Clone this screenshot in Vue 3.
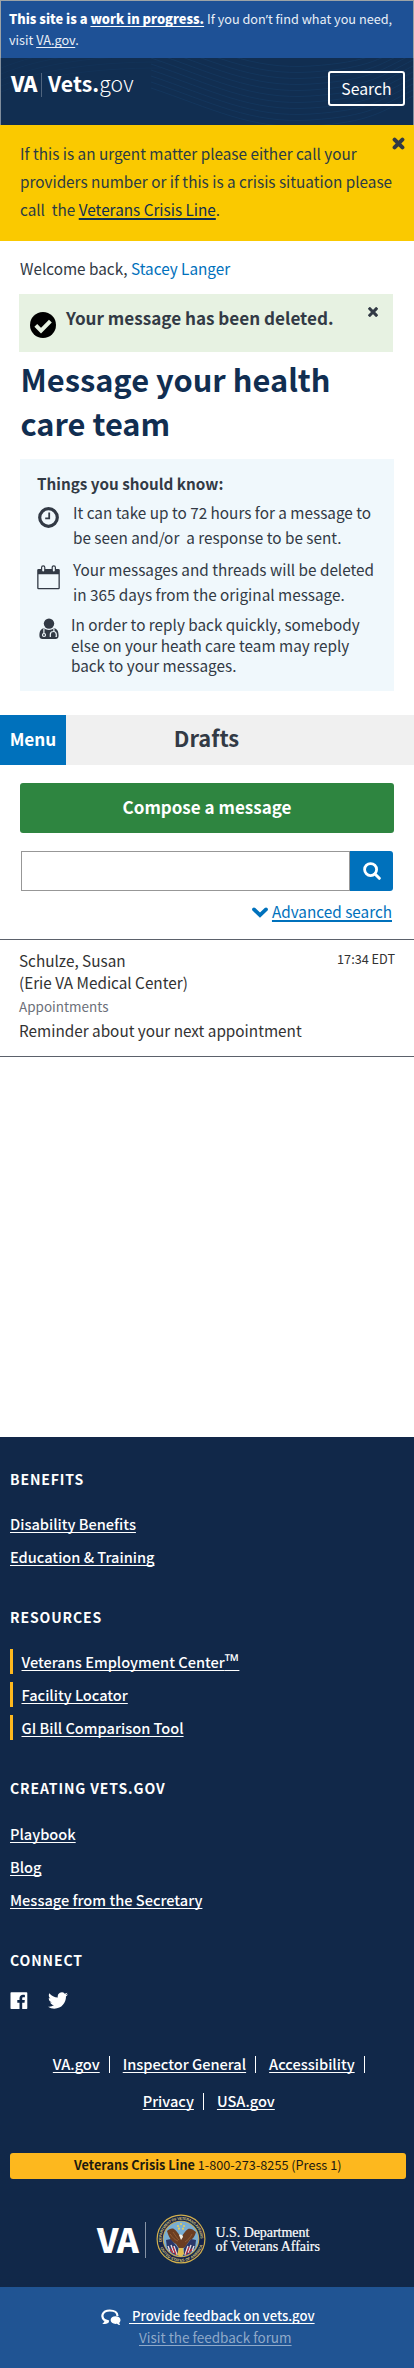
<script setup>
const tips = [
  { icon: 'clock', lines: ['It can take up to 72 hours for a message to', 'be seen and/or \u00a0a response to be sent.'] },
  { icon: 'calendar', lines: ['Your messages and threads will be deleted', 'in 365 days from the original message.'] },
  { icon: 'doctor', lines: ['In order to reply back quickly, somebody', 'else on your heath care team may reply', 'back to your messages.'] }
]
const groups = [
  { title: 'BENEFITS', links: [{ text: 'Disability Benefits' }, { text: 'Education & Training' }] },
  { title: 'RESOURCES', marked: true, links: [{ text: 'Veterans Employment Center', mark: '™' }, { text: 'Facility Locator' }, { text: 'GI Bill Comparison Tool' }] },
  { title: 'CREATING VETS.GOV', links: [{ text: 'Playbook' }, { text: 'Blog' }, { text: 'Message from the Secretary' }] }
]
const waves = Array.from({ length: 11 }, (_, i) => i * 6)
</script>

<template>
  <div class="page">
    <div class="banner">
      <div><b class="b1">This site is a <u>work in progress.</u></b> <span class="b2">If you don<span class="apos">’</span>t find what you need,</span></div>
      <div>visit <u>VA.gov</u>.</div>
    </div>
    <header class="header">
      <svg class="waves" width="412" height="67" viewBox="0 0 412 67" fill="none" stroke="#17406b" stroke-width="1" opacity=".45">
        <path v-for="w in waves" :key="w" :d="`M150 ${w - 30}C210 ${w - 10} 250 ${w + 12} 310 ${w + 8}S380 ${w - 6} 412 ${w - 22}`" />
        <path v-for="w in waves.slice(0, 5)" :key="'l' + w" :d="`M0 ${w + 10}C40 ${w - 6} 90 ${w - 14} 160 ${w - 14}`" opacity=".5" />
      </svg>
      <div class="brand"><span class="va">VA</span><i class="bar"></i><span class="vets">Vets.</span><span class="gov">gov</span></div>
      <button class="search-btn">Search</button>
    </header>

    <section class="urgent">
      <p>If this is an urgent matter please either call your</p>
      <p>providers number or if this is a crisis situation please</p>
      <p>call &nbsp;the <a>Veterans Crisis Line</a>.</p>
      <svg class="x" width="13" height="13" viewBox="0 0 13 13"><path d="M2.6 2.6l7.8 7.8M10.4 2.6l-7.8 7.8" stroke="#323a45" stroke-width="4" stroke-linecap="round" /></svg>
    </section>

    <p class="welcome">Welcome back, <a>Stacey Langer</a></p>

    <div class="notice">
      <svg class="check" width="26" height="26" viewBox="0 0 26 26"><circle cx="13" cy="13" r="13" /><path d="M5.8 13.4l5.2 5.2 9.4-9.4" fill="none" stroke="#e7f2e2" stroke-width="4" /></svg>
      <span>Your message has been deleted.</span>
      <svg class="x" width="10" height="10" viewBox="0 0 13 13"><path d="M2.4 2.4l8.2 8.2M10.6 2.4l-8.2 8.2" stroke="#323a45" stroke-width="3.9" stroke-linecap="square" /></svg>
    </div>

    <h1>Message your health<br />care team</h1>

    <section class="know">
      <h2>Things you should know:</h2>
      <div v-for="t in tips" :key="t.icon" class="tip" :class="t.icon">
        <svg v-if="t.icon === 'clock'" width="21" height="21" viewBox="0 0 21 21" fill="none" stroke="#323a45"><circle cx="10.5" cy="10.5" r="8.8" stroke-width="3.2" /><path d="M11.2 5.4v6H7.2" stroke-width="1.8" /></svg>
        <svg v-else-if="t.icon === 'calendar'" width="23" height="25" viewBox="0 0 23 25">
          <path d="M1.5 4h20a1.3 1.3 0 0 1 1.3 1.3V23a1.3 1.3 0 0 1-1.3 1.3h-20A1.3 1.3 0 0 1 .2 23V5.3A1.3 1.3 0 0 1 1.5 4zM1.5 9.2v13.8h20V9.2z" fill="#323a45" fill-rule="evenodd" />
          <rect x="4.6" y=".8" width="3.2" height="6.2" rx="1.6" fill="#f0f8fc" stroke="#323a45" stroke-width="1.2" /><rect x="15.2" y=".8" width="3.2" height="6.2" rx="1.6" fill="#f0f8fc" stroke="#323a45" stroke-width="1.2" />
        </svg>
        <svg v-else width="20" height="22" viewBox="0 0 20 22">
          <circle cx="10" cy="5.6" r="5.2" fill="#323a45" />
          <path d="M5 10.300C7.500 12.600 12.500 12.600 15 10.300c3.300.5 4.600 3.200 4.600 7.500 0 2.300-1.300 3.300-3 3.300H3.400c-1.700 0-3-1-3-3.300 0-4.300 1.300-7 4.600-7.500z" fill="#323a45" />
          <g fill="none" stroke="#f0f8fc" stroke-width="1.2"><path d="M4.900 10.500v5" /><circle cx="5" cy="17" r="1.500" /><path d="M14.900 10.500v3M11.900 18.500h-.6v-2c0-4 6-4 6 0v2h-.8" /></g>
        </svg>
        <div><p v-for="l in t.lines" :key="l">{{ l }}</p></div>
      </div>
    </section>

    <nav class="folder"><button>Menu</button><h3>Drafts</h3></nav>
    <button class="compose">Compose a message</button>
    <div class="find">
      <input type="text" aria-label="Search messages" />
      <button aria-label="Search"><svg width="18" height="18" viewBox="0 0 18 18" fill="none" stroke="#fff"><circle cx="7.6" cy="7.6" r="6" stroke-width="2.8" /><path d="M12 12l4.3 4.3" stroke-width="3" stroke-linecap="round" /></svg></button>
    </div>
    <div class="advanced">
      <svg width="16" height="11" viewBox="0 0 16 11"><path d="M2 2.400l6 5.800 6-5.800" fill="none" stroke="#0071bc" stroke-width="3.7" stroke-linecap="round" /></svg>
      <a>Advanced search</a>
    </div>

    <article class="message">
      <div class="from"><span>Schulze, Susan</span><time>17:34 EDT</time></div>
      <div>(Erie VA Medical Center)</div>
      <div class="category">Appointments</div>
      <div>Reminder about your next appointment</div>
    </article>

    <footer class="footer">
      <section v-for="g in groups" :key="g.title" class="group" :class="{ marked: g.marked }">
        <h4>{{ g.title }}</h4>
        <ul><li v-for="l in g.links" :key="l.text"><a>{{ l.text }}<span v-if="l.mark" class="tm">{{ l.mark }}</span></a></li></ul>
      </section>
      <section class="group">
        <h4>CONNECT</h4>
        <div class="social">
          <svg width="18" height="18" viewBox="0 0 18 18"><path d="M1.300.3h15.200a.8.8 0 0 1 .8.8v15.200a.8.8 0 0 1-.8.8h-4.300v-6.400h2.300l.3-2.600h-2.600V6.500c0-.8.300-1.300 1.300-1.300h1.400V2.900c-.3 0-1-.1-2-.1-2 0-3.400 1.200-3.400 3.500v1.800H7.300v2.600h2.200v6.400H1.300a.8.8 0 0 1-.8-.8V1.100a.8.8 0 0 1 .8-.8z" fill="#fff" /></svg>
          <svg width="20" height="17" viewBox="0 0 24 20"><path d="M23.950 2.570a10 10 0 0 1-2.820.77 4.960 4.960 0 0 0 2.160-2.720c-.950.560-2 .960-3.130 1.190a4.920 4.920 0 0 0-8.380 4.480C7.690 6.090 4.070 4.130 1.640 1.160a4.820 4.820 0 0 0-.67 2.480c0 1.710.87 3.210 2.190 4.100a4.900 4.900 0 0 1-2.230-.62v.06a4.920 4.920 0 0 0 3.950 4.830 5 5 0 0 1-2.210.08 4.940 4.940 0 0 0 4.600 3.420A9.870 9.870 0 0 1 0 17.540a13.990 13.990 0 0 0 7.560 2.210c9.050 0 14-7.500 14-13.980 0-.21 0-.42-.02-.63a9.940 9.940 0 0 0 2.460-2.550z" fill="#fff" /></svg>
        </div>
      </section>
      <div class="legal">
        <div><a>VA.gov</a><i></i><a>Inspector General</a><i></i><a>Accessibility</a><i class="last"></i></div>
        <div><a>Privacy</a><i></i><a>USA.gov</a></div>
      </div>
      <div class="crisis"><b>Veterans Crisis Line</b> 1-800-273-8255 (Press 1)</div>
      <div class="dept">
        <span class="va">VA</span><i></i>
        <svg width="50" height="50" viewBox="-25 -25 50 50">
          <defs><path id="arcTop" d="M-19.300 3A19.500 19.500 0 1 1 19.300 3" /><path id="arcBottom" d="M-21.300 7A22.400 22.400 0 0 0 21.300 7" /></defs>
          <circle r="24.5" fill="#d2b04c" /><circle r="23.3" fill="#14234a" /><circle r="18.3" fill="#c9a94b" /><circle r="17.4" fill="#79aed3" />
          <text class="seal" textLength="63"><textPath href="#arcTop">DEPARTMENT OF VETERANS AFFAIRS</textPath></text>
          <text class="seal"><textPath href="#arcBottom" startOffset="2">UNITED STATES OF AMERICA</textPath></text>
          <g fill="#e6cf5c"><circle cx="0" cy="-15" r="1.1" /><circle cx="-3" cy="-13" r="1.1" /><circle cx="3" cy="-13" r="1.1" /><circle cx="-2" cy="-10.3" r="1.1" /><circle cx="2" cy="-10.3" r="1.1" /></g>
          <path d="M-15 1l5-1 7 9 1 8-6-2-6-6z" fill="#2a3768" /><path d="M15 1l-5-1-7 9-1 8 6-2 6-6z" fill="#2a3768" />
          <path d="M-13 7l2 5M-10 6l3 8M-7 7l3 9M13 7l-2 5M10 6l-3 8M7 7l-3 9" stroke="#e9dfe4" stroke-width="1.4" />
          <path d="M-11 10l3 4M-8 8l3 8M11 10l-3 4M8 8l-3 8" stroke="#b9333f" stroke-width="1.3" />
          <path d="M-14-8c2-2 5-3 7-2 3 2 5 6 7 8 2-2 4-6 7-8 2-1 5 0 8 3-1 4-3 7-6 8L4 8-1 11-5 5c-4-2-7-6-9-13z" fill="#6b3d22" />
          <path d="M-11-5c3 4 5 6 8 7M-8-7c2 3 4 6 6 8M11-5C9-1 7 1 4 3" stroke="#99633a" stroke-width=".8" fill="none" />
          <path d="M-2-4c2-1 4 0 4 2L0 1z" fill="#f4efe3" /><path d="M-2 9h4l1 6-3 3-4-2z" fill="#e0bd50" />
        </svg>
        <div class="name"><div class="n1">U.S. Department</div><div class="n2">of Veterans Affairs</div></div>
      </div>
    </footer>
    <div class="feedback">
      <div class="f1"><svg width="20" height="17" viewBox="0 0 20 17">
        <path d="M3.800 11.500C-.4 8 .9 1.500 8.800 1.500c4.600 0 7.700 2.200 7.700 5.500" fill="none" stroke="#fff" stroke-width="2.2" /><path d="M2.600 9.600l3.600 1.200 2 .7-.5 2C6 15 3 15.300 1.200 15c1.300-1 2-2 2.200-3z" fill="#fff" />
        <path d="M14.600 7.200c-3 0-5 1.700-5 3.800s2 3.900 5 3.900c.5 0 1 0 1.500-.1.800.8 2 1.300 3.100 1.200-.6-.6-.9-1.400-.9-2.200.7-.7 1.200-1.700 1.200-2.800 0-2.100-2-3.800-4.900-3.800z" fill="#fff" /></svg><a>&nbsp;Provide feedback on vets.gov</a></div>
      <div class="f2"><a>Visit the feedback forum</a></div>
    </div>
  </div>
</template>

<style>
body { background: #fff; }
</style>
<style scoped>
.page { width: 414px; height: 2368px; display: flex; flex-direction: column; overflow: hidden; font: 400 15.3px/28px "Noto Sans CJK SC", "Noto Sans", sans-serif; color: #323a45; text-decoration-skip-ink: none; }
.page * { box-sizing: border-box; }
p, h1, h2, h3, h4, ul { margin: 0; padding: 0; }
li { list-style: none; }
svg { display: block; flex: none; }
button { font-family: inherit; padding: 0; border: 0; margin: 0; }
p, .banner div, .message div, .crisis { white-space: nowrap; }

.banner { height: 58px; border: 1px solid #9da3a6; border-bottom: 0; background: #1e5196; color: #e9eff7; padding: 7px 0 0 8px; font-size: 12.7px; line-height: 21.3px; }
.banner b { font-weight: 900; font-size: 12.86px; color: #fff; }
.banner u { text-underline-offset: 2px; }
.apos { font-family: "Noto Sans", sans-serif; line-height: 1; }
.header { position: relative; height: 67px; background: #112e51; border: solid #7f8d9c; border-width: 0 1px; display: flex; justify-content: space-between; padding: 13px 8px 0 10px; color: #fff; }
.waves { position: absolute; left: 0; top: 0; }
.brand { position: relative; display: flex; height: 28px; line-height: 28px; margin-top: -2px; }
.brand .va { font-weight: 900; font-size: 21px; letter-spacing: -.6px; width: 30px; }
.brand .bar { width: 1px; height: 24px; background: #50657f; margin: 4px 6px 0 0; }
.vets { font-weight: 700; font-size: 21.2px; letter-spacing: .1px; }
.gov { font-weight: 300; font-size: 21.2px; }
.search-btn { position: relative; width: 77px; height: 35px; border: 2px solid #fff; border-radius: 3px; background: transparent; color: #fff; font-size: 15.8px; line-height: 30px; }

.urgent { position: relative; height: 116px; background: #fac900; padding: 14px 0 0 20px; color: #2a3b45; }
.urgent a { text-decoration: underline; text-decoration-thickness: 1.5px; text-underline-offset: 2px; color: #112e51; }
.urgent .x { position: absolute; left: 392px; top: 11.5px; }
.welcome { margin: 13px 0 0 20px; }
.welcome a { color: #0071bc; }
.notice { margin: 12px 0 0 19px; width: 374px; height: 58px; background: #e7f2e2; display: flex; align-items: flex-start; padding: 10px 15px 0 11px; font-weight: 700; font-size: 17.1px; line-height: 27px; white-space: nowrap; }
.notice .check { margin: 8px 10px 0 0; }
.notice .x { margin: 3px 0 0 auto; }
h1 { margin: 5px 0 0 20.5px; font-size: 30.8px; line-height: 44px; font-weight: 700; color: #112e51; height: 88px; }
.know { margin: 14px 0 0 20px; width: 374px; height: 232px; background: #f0f8fc; padding: 12px 0 0 17px; line-height: 25px; }
.know h2 { font-size: 15.26px; line-height: 25px; font-weight: 700; }
.tip { display: flex; }
.clock { margin-top: 4px; }
.clock svg { margin: 7px 14px 0 1px; }
.calendar { margin-top: 7px; }
.calendar svg { margin: 8px 13px 0 0; }
.doctor { margin-top: 7px; line-height: 20.7px; }
.doctor svg { margin: 4px 12px 0 2px; }
.folder { margin-top: 24px; height: 50px; background: #f0f0f0; display: grid; grid-template-columns: 66px 282px 66px; align-items: start; }
.folder button { height: 50px; background: #0071bc; color: #fff; font-size: 17.2px; font-weight: 700; line-height: 47px; padding-bottom: 3px; }
.folder h3 { font-size: 21.9px; text-align: center; line-height: 46px; padding-right: 1px; }
.compose { margin: 18px 0 0 20px; width: 374px; height: 50px; border-radius: 3px; background: #2e8540; color: #fff; font-weight: 700; font-size: 17.05px; line-height: 47px; padding-bottom: 3px; }
.find { margin: 18px 0 0 21px; width: 372px; height: 40px; display: flex; }
.find input { width: 329px; height: 40px; border: 1px solid #979797; background: #fff; padding: 0 8px; border-radius: 0; }
.find button { width: 43px; background: #0071bc; border-radius: 0 3px 3px 0; display: flex; justify-content: center; align-items: center; }
.advanced { margin-top: 6px; padding-right: 22px; display: flex; justify-content: flex-end; align-items: center; height: 28px; color: #0071bc; }
.advanced svg { margin: 2px 4px 0 0; }
.advanced a { text-decoration: underline; text-decoration-thickness: 1.5px; text-underline-offset: 2px; }
.message { margin-top: 14px; height: 118px; border: solid #5b616b; border-width: 1px 0; padding: 9px 19px 0; line-height: 22px; color: #323232; }
.from { display: flex; justify-content: space-between; }
.from time { font-size: 12.68px; line-height: 20px; }
.message .category { font-size: 13.47px; line-height: 20px; color: #6c7079; margin: 3px 0; }

.footer { margin-top: 380px; height: 850px; background: #112849; color: #fff; padding-left: 10px; font-weight: 500; font-size: 14.6px; }
.group { padding-top: 34px; }
.group:first-child { padding-top: 32px; }
h4 { font-size: 14px; line-height: 20px; letter-spacing: .88px; font-weight: 700; }
.group ul { margin: 18px 0 0; }
.group:nth-child(3) ul { margin-top: 19px; }
.footer a { text-decoration: underline; text-decoration-thickness: 1px; text-underline-offset: 2px; }
.group li { line-height: 33px; height: 33px; }
.group.marked ul { padding: 4px 0; }
.group.marked li { line-height: 25px; height: 25px; margin: 0 0 8px -.5px; border-left: 3.5px solid #fdb81e; padding-left: 9px; }
.group.marked li:last-child { margin-bottom: 0; }
.tm { font: 600 19px/1 "Open Sans", sans-serif; }
.social { display: flex; gap: 20px; margin-top: 22px; align-items: flex-start; height: 18px; }
.legal { margin-top: 36px; padding-right: 6.5px; }
.legal div { display: flex; align-items: center; justify-content: center; height: 36.5px; }
.legal i { width: 1px; height: 17px; background: #fff; margin: 1px 13px 0 9px; }
.legal i.last { margin-right: 0; }
.crisis { margin: 34px 0 0 -.5px; width: 396.5px; height: 26px; border-radius: 3px; background: #fdb81e; color: #1c1a10; text-align: center; font-size: 12.69px; line-height: 23.5px; font-weight: 400; }
.dept { display: flex; margin: 35px 0 0 87px; height: 50px; }
.dept .va { font-size: 33.6px; font-weight: 900; line-height: 49px; width: 48px; letter-spacing: -1px; }
.dept i { width: 1px; height: 36px; background: #8794a6; margin: 8px 10px 0 0; }
.name { font: 14px/14px "Liberation Serif", serif; margin: 12px 0 0 9.5px; white-space: nowrap; -webkit-text-stroke: .2px #fff; }
.n1 { letter-spacing: -.05px; }
.n2 { letter-spacing: -.05px; }
.seal { font: 700 3.8px "Liberation Sans", sans-serif; fill: #d9c374; }
.feedback { height: 81px; background: #205493; color: #fff; font-size: 13.1px; font-weight: 500; line-height: 21.5px; padding-top: 18px; }
.feedback a { text-decoration: underline; text-underline-offset: 2px; }
.f1 { display: flex; padding-left: 101px; white-space: pre; }
.f1 svg { margin: 4px 8px 0 0; }
.f2 { font-size: 13.52px; font-weight: 400; color: #8fa9c9; padding-left: 139px; }
</style>
